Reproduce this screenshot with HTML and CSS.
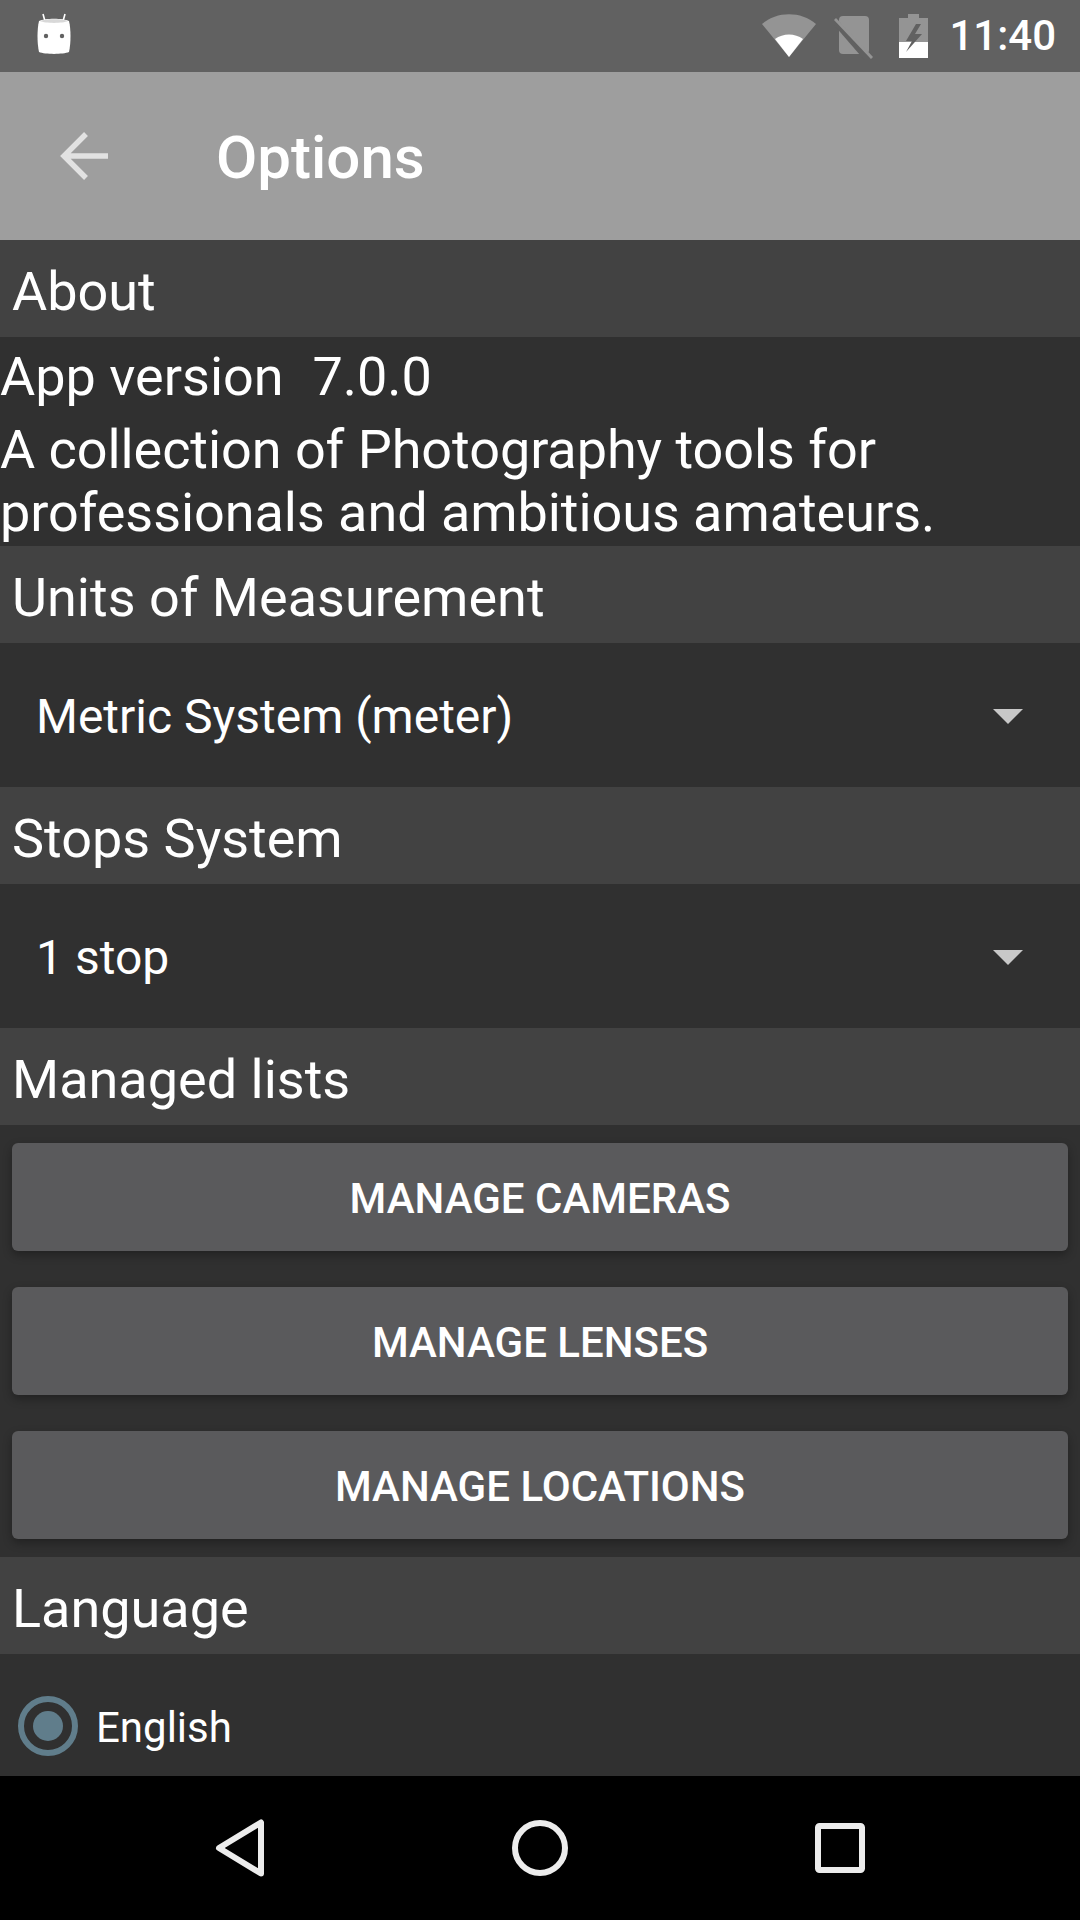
FILE: index.html
```html
<!DOCTYPE html>
<html lang="en">
<head>
<meta charset="utf-8">
<title>Options</title>
<link rel="stylesheet" href="styles.css">
</head>
<body>
<div class="screen">
  <div class="status">
    <svg class="notif" viewBox="0 0 36 42" width="36" height="42"><path d="M7 1 L9.500 10 M29 1 L26.500 10" stroke="#fff" stroke-width="1.600" fill="none"/><path d="M3 8 C9 5 27 5 33 8 C35 16 35 30 33 39 C27 41.500 9 41.500 3 39 C1 30 1 16 3 8 Z" fill="#fff"/><path d="M4 8 C9 5.500 27 5.500 32 8 C27 10.500 9 10.500 4 8 Z" fill="#d8d8d8"/><circle cx="10" cy="23" r="2.200" fill="#616161"/><circle cx="26" cy="23" r="2.200" fill="#616161"/></svg>
    <div class="status-right">
      <svg class="wifi" viewBox="0 0 54 44" width="54" height="44"><path d="M0 10 C15 -3 39 -3 54 10 L27 43 Z" fill="#949494"/><path d="M13 25 C21 19 33 19 41 25 L27 43 Z" fill="#fff"/></svg>
      <svg class="sim" viewBox="0 0 41 44" width="41" height="44"><path d="M9 0 H31 Q35 0 35 4 V34 Q35 38 31 38 H9 Q5 38 5 34 V4 Q5 0 9 0 Z" fill="#949494"/><path d="M-2 2 L36 46" stroke="#616161" stroke-width="6"/><path d="M1 3 L38 42" stroke="#949494" stroke-width="2.800"/></svg>
      <svg class="battery" viewBox="0 0 29 44" width="29" height="44"><path d="M9 0 H20 V4 H29 V44 H0 V4 H9 Z" fill="#949494"/><path d="M0 28 H29 V44 H0 Z" fill="#fff"/><path d="M17 10 L7 27 H13 L7 38 L23 20 H16 L22 10 Z" fill="#616161"/></svg>
      <span class="clock">11:40</span>
    </div>
  </div>

  <div class="toolbar">
    <svg class="back" viewBox="0 0 48 48" width="48" height="48"><path d="M48 24 H4 M26 2 L4 24 L26 46" stroke="#e2e2e2" stroke-width="5.500" fill="none"/></svg>
    <span class="title">Options</span>
  </div>

  <main class="content">
    <h2 class="section">About</h2>
    <div class="about">
      <p class="version">App version&nbsp; <span class="version-num">7.0.0</span></p>
      <p class="desc">A collection of Photography tools for professionals and ambitious amateurs.</p>
    </div>

    <h2 class="section">Units of Measurement</h2>
    <div class="spinner">
      <span>Metric System (meter)</span>
      <span class="caret"></span>
    </div>

    <h2 class="section">Stops System</h2>
    <div class="spinner">
      <span>1 stop</span>
      <span class="caret"></span>
    </div>

    <h2 class="section">Managed lists</h2>
    <div class="buttons">
      <button class="btn">MANAGE CAMERAS</button>
      <button class="btn">MANAGE LENSES</button>
      <button class="btn">MANAGE LOCATIONS</button>
    </div>

    <h2 class="section">Language</h2>
    <div class="radio-row">
      <span class="radio"><span class="radio-dot"></span></span>
      <span class="radio-label">English</span>
    </div>
  </main>

  <nav class="navbar">
    <svg viewBox="0 0 52 58" width="52" height="58"><path d="M47 3.500 V54.500 L5 29 Z" fill="none" stroke="#ececec" stroke-width="6" stroke-linejoin="round"/></svg>
    <svg viewBox="0 0 56 56" width="56" height="56"><circle cx="28" cy="28" r="25" fill="none" stroke="#ececec" stroke-width="6"/></svg>
    <svg viewBox="0 0 50 50" width="50" height="50"><rect x="3" y="3" width="44" height="44" rx="1.500" fill="none" stroke="#ececec" stroke-width="6"/></svg>
  </nav>
</div>
</body>
</html>
```
FILE: styles.css
```css
* { box-sizing: border-box; }
html, body { margin: 0; padding: 0; }
body { background: #303030; font-family: Roboto, sans-serif; color: #fff; }
.screen { width: 1080px; height: 1920px; display: flex; flex-direction: column; overflow: hidden; }

.status { height: 72px; background: #616161; display: flex; align-items: center; justify-content: space-between; padding-left: 36px; flex: none; }
.notif { margin-top: -4px; }
.status-right { display: flex; align-items: center; padding-right: 24px; }
.wifi { margin-right: 18px; }
.sim { margin-right: 24px; margin-top: 4px; }
.battery { margin-right: 21px; }
.clock { font-size: 42px; font-weight: 500; line-height: 72px; }

.toolbar { height: 168px; background: #9e9e9e; display: flex; align-items: center; padding-left: 60px; flex: none; }
.title { font-size: 60px; font-weight: 500; margin-left: 108px; padding-top: 2px; }

.content { flex: 1; display: flex; flex-direction: column; background: #303030; }
.section { margin: 0; height: 97px; background: #424242; font-size: 54px; font-weight: 400; line-height: 104px; padding-left: 12px; flex: none; }

.about { height: 209px; font-size: 54px; display: flex; flex-direction: column; flex: none; }
.version { margin: 0; line-height: 63px; padding-top: 8px; }
.version-num { margin-left: 2px; }
.desc { margin: 0; line-height: 63px; padding-top: 10px; letter-spacing: -0.06px; }

.spinner { height: 144px; display: flex; align-items: center; justify-content: space-between; padding: 2px 57px 0 36px; font-size: 48px; flex: none; }
.caret { width: 0; height: 0; border-left: 15px solid transparent; border-right: 15px solid transparent; border-top: 15px solid #c8c8c8; }

.buttons { display: flex; flex-direction: column; gap: 36px; padding: 18px 12px; flex: none; }
.btn { height: 108px; border: 0; border-radius: 6px; background: #5a5a5c; color: #fff; font-family: Roboto, sans-serif; font-size: 42px; font-weight: 500; box-shadow: 0 4px 10px rgba(0,0,0,0.3); padding: 2px 0 0; }

.radio-row { flex: 1; display: flex; align-items: flex-start; padding: 42px 0 0 18px; }
.radio { width: 60px; height: 60px; border: 6px solid #607d8b; border-radius: 50%; display: flex; align-items: center; justify-content: center; flex: none; }
.radio-dot { width: 30px; height: 30px; border-radius: 50%; background: #607d8b; }
.radio-label { font-size: 42px; margin-left: 18px; line-height: 60px; padding-top: 2px; }

.navbar { height: 144px; background: #000; display: flex; align-items: center; flex: none; padding-left: 214px; }
.navbar svg:nth-child(1) { margin-right: 246px; }
.navbar svg:nth-child(2) { margin-right: 247px; }
```
